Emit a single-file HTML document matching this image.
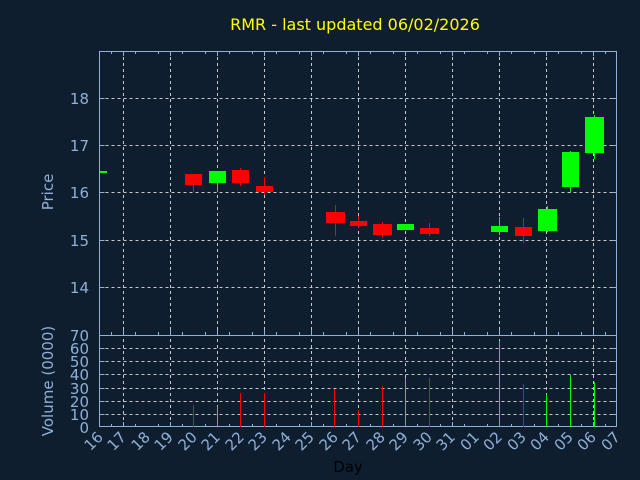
<!DOCTYPE html>
<html><head><style>body{margin:0;background:#0f1e2f}svg{display:block}</style></head><body>
<svg width="640" height="480" xmlns="http://www.w3.org/2000/svg" font-family="DejaVu Sans, Liberation Sans, sans-serif">
<rect width="640" height="480" fill="#0f1e2f"/>
<text x="355" y="30" fill="#ffff00" font-size="16" text-anchor="middle">RMR - last updated 06/02/2026</text>
<g stroke="#c8c8c8" stroke-width="1" stroke-dasharray="3,3">
<path d="M99.5 98.5H616M99.5 145.5H616M99.5 192.5H616M99.5 240.5H616M99.5 287.5H616"/>
<path d="M99.5 348.5H616M99.5 361.5H616M99.5 374.5H616M99.5 388.5H616M99.5 401.5H616M99.5 414.5H616"/>
<path d="M123.5 51V427M170.5 51V427M217.5 51V427M264.5 51V427M311.5 51V427M358.5 51V427M405.5 51V427M452.5 51V427M499.5 51V427M546.5 51V427M593.5 51V427"/>
</g>
<g stroke="#8fb0d8" stroke-width="1" fill="none">
<rect x="99.5" y="51.5" width="517" height="375"/>
<path d="M99.5 335.5H616.5"/>
<path d="M99.5 98.5h5M99.5 145.5h5M99.5 192.5h5M99.5 240.5h5M99.5 287.5h5M616.5 98.5h-5M616.5 145.5h-5M616.5 192.5h-5M616.5 240.5h-5M616.5 287.5h-5"/>
<path d="M99.5 348.5h5M99.5 361.5h5M99.5 374.5h5M99.5 388.5h5M99.5 401.5h5M99.5 414.5h5M616.5 348.5h-5M616.5 361.5h-5M616.5 374.5h-5M616.5 388.5h-5M616.5 401.5h-5M616.5 414.5h-5"/>
<path id="tk" d="M111.5 51v3M135.5 51v3M158.5 51v3M182.5 51v3M205.5 51v3M229.5 51v3M252.5 51v3M276.5 51v3M299.5 51v3M323.5 51v3M346.5 51v3M370.5 51v3M393.5 51v3M417.5 51v3M440.5 51v3M464.5 51v3M487.5 51v3M511.5 51v3M534.5 51v3M558.5 51v3M581.5 51v3M605.5 51v3"/>
<path d="M123.5 51v5M170.5 51v5M217.5 51v5M264.5 51v5M311.5 51v5M358.5 51v5M405.5 51v5M452.5 51v5M499.5 51v5M546.5 51v5M593.5 51v5"/>
<path d="M123.5 335v-5M170.5 335v-5M217.5 335v-5M264.5 335v-5M311.5 335v-5M358.5 335v-5M405.5 335v-5M452.5 335v-5M499.5 335v-5M546.5 335v-5M593.5 335v-5"/>
<path d="M123.5 427v-5M170.5 427v-5M217.5 427v-5M264.5 427v-5M311.5 427v-5M358.5 427v-5M405.5 427v-5M452.5 427v-5M499.5 427v-5M546.5 427v-5M593.5 427v-5"/>
<use href="#tk" transform="translate(0,281)"/>
<use href="#tk" transform="translate(0,373)"/>
</g>
<g fill="#8fb0d8" font-size="15" text-anchor="end">
<text x="89" y="104">18</text><text x="89" y="151">17</text><text x="89" y="198">16</text><text x="89" y="246">15</text><text x="89" y="293">14</text>
<text x="89" y="341">70</text><text x="89" y="354">60</text><text x="89" y="367">50</text><text x="89" y="380">40</text><text x="89" y="394">30</text><text x="89" y="407">20</text><text x="89" y="420">10</text><text x="89" y="433">0</text>
</g>
<text transform="translate(53,192) rotate(-90)" fill="#8fb0d8" font-size="15" text-anchor="middle">Price</text>
<text transform="translate(53,381) rotate(-90)" fill="#8fb0d8" font-size="15" text-anchor="middle">Volume (0000)</text>
<g fill="#8fb0d8" font-size="15" text-anchor="end">
<text transform="translate(104,438) rotate(-45)">16</text>
<text transform="translate(127,438) rotate(-45)">17</text>
<text transform="translate(151,438) rotate(-45)">18</text>
<text transform="translate(174,438) rotate(-45)">19</text>
<text transform="translate(198,438) rotate(-45)">20</text>
<text transform="translate(221,438) rotate(-45)">21</text>
<text transform="translate(245,438) rotate(-45)">22</text>
<text transform="translate(268,438) rotate(-45)">23</text>
<text transform="translate(292,438) rotate(-45)">24</text>
<text transform="translate(315,438) rotate(-45)">25</text>
<text transform="translate(339,438) rotate(-45)">26</text>
<text transform="translate(362,438) rotate(-45)">27</text>
<text transform="translate(386,438) rotate(-45)">28</text>
<text transform="translate(409,438) rotate(-45)">29</text>
<text transform="translate(433,438) rotate(-45)">30</text>
<text transform="translate(456,438) rotate(-45)">31</text>
<text transform="translate(480,438) rotate(-45)">01</text>
<text transform="translate(503,438) rotate(-45)">02</text>
<text transform="translate(527,438) rotate(-45)">03</text>
<text transform="translate(550,438) rotate(-45)">04</text>
<text transform="translate(574,438) rotate(-45)">05</text>
<text transform="translate(597,438) rotate(-45)">06</text>
<text transform="translate(621,438) rotate(-45)">07</text>
</g>
<text x="348" y="472" fill="#000" font-size="15" text-anchor="middle">Day</text>
<g>
<rect x="100" y="171" width="7" height="2" fill="#00ff00"/>
<path d="M193.5 185V192" stroke="#ff0000"/><rect x="185" y="174" width="17" height="11" fill="#ff0000"/>
<path d="M217.5 183V192" stroke="#00ff00"/><rect x="209" y="171" width="17" height="12" fill="#00ff00"/>
<path d="M240.5 168V186" stroke="#ff0000"/><rect x="232" y="170" width="17" height="13" fill="#ff0000"/>
<path d="M264.5 177V195" stroke="#ff0000"/><rect x="256" y="186" width="17" height="6" fill="#ff0000"/>
<path d="M335.5 205V236" stroke="#ff0000"/><rect x="326" y="212" width="19" height="11" fill="#ff0000"/>
<path d="M358.5 216V228" stroke="#ff0000"/><rect x="350" y="221" width="17" height="5" fill="#ff0000"/>
<path d="M382.5 222V238" stroke="#ff0000"/><rect x="373" y="224" width="19" height="11" fill="#ff0000"/>
<rect x="397" y="224" width="17" height="6" fill="#00ff00"/>
<path d="M429.5 223V236" stroke="#ff0000"/><rect x="420" y="228" width="19" height="6" fill="#ff0000"/>
<path d="M499.5 217V235" stroke="#00ff00"/><rect x="491" y="226" width="17" height="6" fill="#00ff00"/>
<path d="M523.5 218V243" stroke="#ff0000"/><rect x="515" y="227" width="17" height="9" fill="#ff0000"/>
<path d="M547.5 206V232" stroke="#00ff00"/><rect x="538" y="209" width="19" height="22" fill="#00ff00"/>
<path d="M570.5 151V193" stroke="#00ff00"/><rect x="562" y="152" width="17" height="35" fill="#00ff00"/>
<path d="M594.5 115V159" stroke="#00ff00"/><rect x="585" y="117" width="19" height="36" fill="#00ff00"/>
</g>
<g stroke-width="1">
<path d="M193.5 405V427M240.5 393V427M264.5 393V427M334.5 389V427M358.5 410V427M382.5 386V427M429.5 378V427M523.5 384V427" stroke="#ff0000"/>
<path d="M217.5 406V427M405.5 378V427M499.5 341V427M546.5 394V427M570.5 375V427M594.5 382V427" stroke="#00ff00"/>
</g>
</svg>
</body></html>
